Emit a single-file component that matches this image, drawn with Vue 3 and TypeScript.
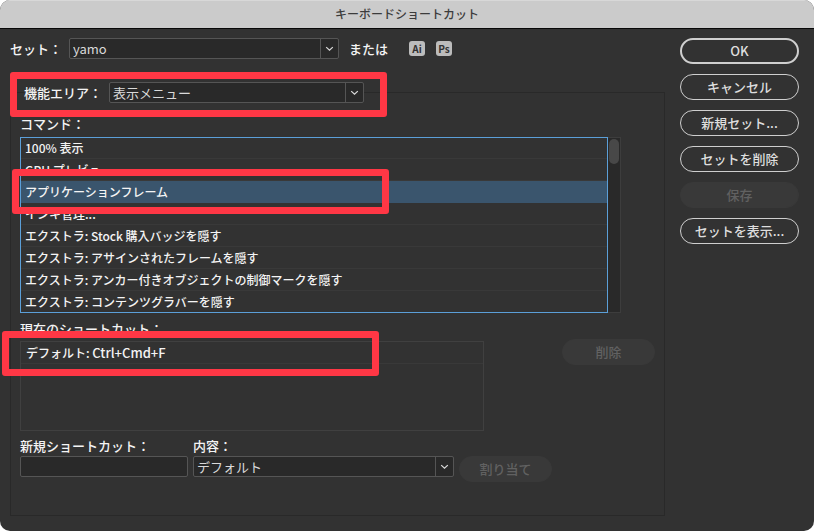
<script setup lang="ts">
import { ref } from 'vue'

interface Action {
  label: string
  primary?: boolean
  disabled?: boolean
}

const actions: Action[] = [
  { label: 'OK', primary: true },
  { label: 'キャンセル' },
  { label: '新規セット...' },
  { label: 'セットを削除' },
  { label: '保存', disabled: true },
  { label: 'セットを表示...' },
]

const commands: string[] = [
  '100% 表示',
  'GPU プレビュー',
  'アプリケーションフレーム',
  'インキ管理...',
  'エクストラ: Stock 購入バッジを隠す',
  'エクストラ: アサインされたフレームを隠す',
  'エクストラ: アンカー付きオブジェクトの制御マークを隠す',
  'エクストラ: コンテンツグラバーを隠す',
]

const selected = ref(2)
const shortcutSet = ref('yamo')
const area = ref('表示メニュー')
const context = ref('デフォルト')
const newShortcut = ref('')
</script>

<template>
  <main class="dialog">
    <header class="titlebar">
      <h1>キーボードショートカット</h1>
    </header>

    <div class="body">
      <div class="content">
        <div class="set-row">
          <label for="set">セット：</label>
          <div class="dropdown dropdown-set">
            <select id="set" v-model="shortcutSet">
              <option>yamo</option>
            </select>
            <svg class="chevron" viewBox="0 0 18 19" aria-hidden="true"><path d="M5.5 8 9 11.2 12.5 8" /></svg>
          </div>
          <span class="or">または</span>
          <button type="button" class="app-icon" aria-label="Illustrator">Ai</button>
          <button type="button" class="app-icon" aria-label="Photoshop">Ps</button>
        </div>

        <fieldset class="group">
          <legend>
            <span class="legend-row">
              <label for="area">機能エリア：</label>
              <span class="dropdown dropdown-area">
                <select id="area" v-model="area">
                  <option>表示メニュー</option>
                </select>
                <svg class="chevron" viewBox="0 0 18 19" aria-hidden="true"><path d="M5.5 8 9 11.2 12.5 8" /></svg>
              </span>
            </span>
          </legend>

          <div id="commands-label" class="caption">コマンド：</div>
          <div class="list-row">
            <ul class="commands" role="listbox" aria-labelledby="commands-label">
              <li
                v-for="(command, i) in commands"
                :key="command"
                role="option"
                :aria-selected="i === selected"
                :class="{ selected: i === selected }"
                @click="selected = i"
              >
                {{ command }}
              </li>
            </ul>
            <div class="track"><div class="thumb"></div></div>
          </div>

          <div id="current-label" class="caption caption-current">現在のショートカット：</div>
          <div class="current-row">
            <ul class="current" aria-labelledby="current-label">
              <li>デフォルト: <kbd>Ctrl+Cmd+F</kbd></li>
            </ul>
            <button type="button" class="pill pill-small" disabled>削除</button>
          </div>

          <div class="assign-row">
            <div class="field field-new">
              <label for="new-shortcut">新規ショートカット：</label>
              <input id="new-shortcut" v-model="newShortcut" type="text" />
            </div>
            <div class="field field-context">
              <label for="context">内容：</label>
              <div class="dropdown">
                <select id="context" v-model="context">
                  <option>デフォルト</option>
                </select>
                <svg class="chevron" viewBox="0 0 18 19" aria-hidden="true"><path d="M5.5 8 9 11.2 12.5 8" /></svg>
              </div>
            </div>
            <button type="button" class="pill pill-small" disabled>割り当て</button>
          </div>
        </fieldset>
      </div>

      <aside class="actions">
        <button
          v-for="action in actions"
          :key="action.label"
          type="button"
          class="pill"
          :class="{ primary: action.primary }"
          :disabled="action.disabled"
        >
          {{ action.label }}
        </button>
      </aside>
    </div>

    <div class="mark mark-area"></div>
    <div class="mark mark-command"></div>
    <div class="mark mark-shortcut"></div>
  </main>
</template>

<style>
body {
  margin: 0;
  background: #fff;
}
</style>

<style scoped>
* {
  box-sizing: border-box;
}

.dialog {
  position: relative;
  display: flex;
  flex-direction: column;
  min-height: 100vh;
  overflow: hidden;
  border-radius: 10px;
  background: #323232;
  color: #f4f4f4;
  font: 500 13px/20px "Noto Sans CJK JP", sans-serif;
}

button,
input,
select {
  margin: 0;
  font: inherit;
}

.titlebar {
  height: 29px;
  border-top: 1px solid #d8d8d8;
  border-bottom: 1px solid #080808;
  background: #cbcbcb;
  color: #3c3c3c;
  text-align: center;
}

h1 {
  margin: 0;
  font-size: 12px;
  font-weight: 500;
  line-height: 26px;
}

.body {
  display: flex;
  flex: 1;
  gap: 15px;
  padding: 9px 15px 15px 10px;
}

.content {
  display: flex;
  flex: 1;
  flex-direction: column;
  min-width: 0;
}

.set-row {
  display: flex;
  align-items: center;
}

.set-row label {
  width: 59px;
}

.or {
  margin: 0 21px 0 10px;
}

.dropdown {
  position: relative;
  display: flex;
  height: 21px;
}

.dropdown-set {
  width: 270px;
}

.dropdown-area {
  width: 255px;
}

select,
input {
  width: 100%;
  height: 21px;
  padding: 0 22px 0 3px;
  border: 1px solid #555;
  border-radius: 2px;
  appearance: none;
  background: #292929;
  color: #dadada;
  font-weight: 400;
  line-height: 19px;
}

.chevron {
  position: absolute;
  top: 1px;
  right: 1px;
  width: 18px;
  height: 19px;
  border-left: 1px solid #555;
  pointer-events: none;
}

.chevron path {
  fill: none;
  stroke: #dcdcdc;
  stroke-width: 1.3;
}

.app-icon {
  width: 16px;
  height: 15px;
  margin-right: 11px;
  padding: 0;
  border: 0;
  border-radius: 3px;
  background: #bcbcbc;
  color: #323232;
  font-size: 10px;
  font-weight: 700;
  line-height: 15px;
}

.group {
  flex: 1;
  min-width: 0;
  margin: 23px 0 0;
  padding: 0 9px 0;
  border: 1px solid #292929;
}

legend {
  margin-left: 4px;
  padding: 0;
}

.legend-row {
  display: flex;
  align-items: center;
}

.legend-row label {
  width: 85px;
}

.caption {
  margin-top: 11px;
}

.list-row {
  display: flex;
  margin: 3px 34px 0 0;
}

ul {
  margin: 0;
  padding: 0;
  list-style: none;
}

.commands {
  flex: 1;
  min-width: 0;
  outline: 1px solid #5b9fd8;
  outline-offset: -1px;
}

li {
  height: 22px;
  padding-left: 5px;
  border-bottom: 1px solid #393939;
  font-size: 12px;
  line-height: 22px;
  white-space: nowrap;
}

kbd {
  font-family: inherit;
  font-size: 13px;
}

.commands li:last-child {
  border-bottom: 0;
}

.selected {
  border-color: #3a556d;
  background: #3a556d;
}

.track {
  width: 13px;
  padding: 1px;
  border: 1px solid #3d3d3d;
  border-left: 0;
  background: #292929;
}

.thumb {
  height: 25px;
  border-radius: 5px;
  background: #484848;
}

.caption-current {
  margin-top: 6px;
}

.current-row {
  display: flex;
  align-items: flex-start;
  justify-content: space-between;
}

.current {
  width: 464px;
  height: 90px;
  margin-top: 2px;
  border: 1px solid #404040;
}

.assign-row {
  display: flex;
  align-items: flex-end;
  gap: 5px;
  margin-top: 5px;
}

.assign-row .pill {
  margin-bottom: -5px;
}

.field label {
  display: block;
}

.field-new {
  width: 168px;
}

.field-context {
  width: 261px;
}

.actions {
  display: flex;
  flex-direction: column;
  gap: 10px;
  width: 119px;
}

.pill {
  height: 26px;
  padding: 0;
  border: 1px solid #cfcfcf;
  border-radius: 13px;
  background: transparent;
  color: #dedede;
  line-height: 24px;
}

.pill.primary {
  border-width: 2px;
  line-height: 22px;
}

.pill:disabled {
  border-color: #393939;
  background: #393939;
  color: #616161;
}

.pill-small {
  width: 93px;
}

.mark {
  position: absolute;
  height: 45px;
  border: 7px solid #ff3745;
  border-radius: 3px;
  pointer-events: none;
}

.mark-area {
  top: 72px;
  left: 10px;
  width: 377px;
}

.mark-command {
  top: 169px;
  left: 12px;
  width: 377px;
}

.mark-shortcut {
  top: 331px;
  left: 2px;
  width: 377px;
}
</style>
